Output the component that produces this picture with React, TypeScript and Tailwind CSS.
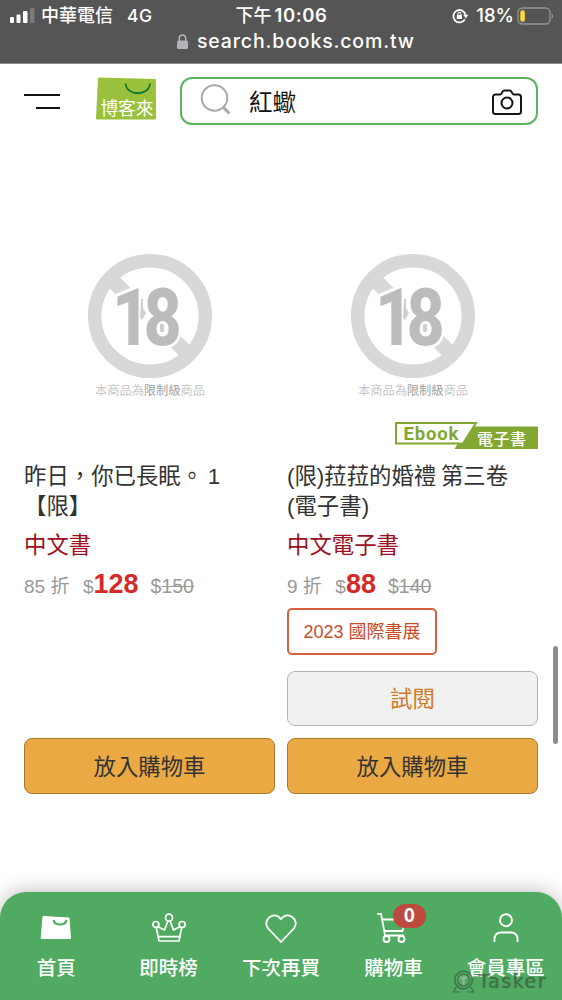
import type { ReactNode } from "react";

type Product = {
  title: string[];
  category: string;
  discount: string;
  price: string;
  listPrice: string;
  ebook?: boolean;
  tag?: string;
};

const products: Product[] = [
  {
    title: ["昨日，你已長眠。 1", "【限】"],
    category: "中文書",
    discount: "85 折",
    price: "128",
    listPrice: "150",
  },
  {
    title: ["(限)菈菈的婚禮 第三卷", "(電子書)"],
    category: "中文電子書",
    discount: "9 折",
    price: "88",
    listPrice: "140",
    ebook: true,
    tag: "2023 國際書展",
  },
];

const StatusBar = () => (
  <div className="h-16 shrink-0 border-b border-[#8a8a8a] bg-[#555555] font-['Inter','Noto_Sans_CJK_TC',sans-serif] text-white">
    <div className="grid h-[31px] grid-cols-[1fr_auto_1fr] items-center pl-[9px] pr-[8px] text-[17px] font-medium leading-[31px]">
      <div className="flex items-center">
        <svg width="26" height="16" viewBox="0 0 26 16" fill="#fff">
          <rect x="1" y="9" width="4" height="6" rx="1" />
          <rect x="7.5" y="6.5" width="4" height="8.5" rx="1" />
          <rect x="14" y="3" width="4.5" height="12" rx="1" />
          <rect x="21" y="0" width="4.5" height="15" rx="1" fill="#7b7b7b" />
        </svg>
        <span className="ml-[6px] text-[18px]">中華電信</span>
        <span className="ml-[14px] text-[17.5px] tracking-[0.5px]">4G</span>
      </div>
      <div className="text-[18.5px] font-semibold">
        <span className="text-[18px] font-medium">下午</span>
        <span className="ml-[3px] tracking-[0.6px]">10:06</span>
      </div>
      <div className="flex items-center justify-end">
        <svg width="17" height="16" viewBox="0 0 17 16" fill="none" stroke="#fff" strokeWidth="1.8">
          <path d="M12.9 11.4A6.2 6.2 0 1 1 13.6 6.8" />
          <path d="M11.2 6.8h5.2l-2.6 3.6z" fill="#fff" stroke="none" />
          <rect x="4.8" y="7" width="5.2" height="4" rx="0.6" fill="#fff" stroke="none" />
          <path d="M5.9 7.3V6a1.5 1.5 0 0 1 3 0v1.3" strokeWidth="1.1" />
        </svg>
        <span className="ml-[7px] text-[18.5px]">18%</span>
        <svg className="ml-[3px]" width="37" height="18" viewBox="0 0 37 18" fill="none">
          <rect x="1" y="1" width="32" height="16" rx="4.5" stroke="#929292" strokeWidth="1.4" />
          <rect x="3.3" y="3.2" width="4.6" height="11.6" rx="2" fill="#fbd53b" />
          <path d="M34.6 6.4c2 .8 2 4.4 0 5.2z" fill="#929292" />
        </svg>
      </div>
    </div>
    <div className="flex h-5 items-center pl-[177px] text-[19.5px] font-medium leading-5 tracking-[0.85px]">
      <svg width="11" height="15" viewBox="0 0 11 15">
        <rect y="6.5" width="11" height="8.5" rx="1.5" fill="#b2b2b7" />
        <path d="M2.3 7V4.3a3.2 3.2 0 0 1 6.4 0V7" fill="none" stroke="#b2b2b7" strokeWidth="1.5" />
      </svg>
      <span className="ml-[9px]">search.books.com.tw</span>
    </div>
  </div>
);

const Header = () => (
  <header className="flex h-[72px] shrink-0 items-center px-6 pt-[2px]">
    <div className="mt-px flex w-9 flex-col items-end gap-[11.5px]">
      <span className="h-[2px] w-9 bg-[#111]" />
      <span className="h-[2px] w-6 bg-[#111]" />
    </div>
    <svg className="-mt-1 ml-9" width="60" height="44" viewBox="0 0 60 44">
      <path d="M3 .5 59 2a1 1 0 0 1 .9 1L60 41.500a1 1 0 0 1-1 1H1a1 1 0 0 1-1-1L2 1.500a1 1 0 0 1 1-1z" fill="#99c13c" />
      <path d="M29.500 6.500c1 13 23.500 13 24.500 0" fill="none" stroke="#117a35" strokeWidth="1.8" />
      <text x="4.500" y="37.500" fontSize="17.8" fill="#fff" fontFamily="Noto Sans CJK TC" textLength="53">
        博客來
      </text>
    </svg>
    <div className="ml-6 flex h-12 flex-1 items-center rounded-[12px] border-2 border-[#58b45f] pl-[18px] pr-[14px]">
      <svg className="-mt-[3px]" width="32" height="32" viewBox="0 0 32 32" fill="none" stroke="#a9a9a9">
        <circle cx="14.500" cy="14" r="12.8" strokeWidth="2" />
        <path d="m23 23 6.500 6.500" strokeWidth="3" />
      </svg>
      <span className="ml-[17px] mt-[3px] text-[23.5px] leading-8 text-[#111]">紅蠍</span>
      <svg className="ml-auto mt-[2px]" width="30" height="26" viewBox="0 0 30 26" fill="none" stroke="#151515" strokeWidth="2" strokeLinejoin="round">
        <path d="M3.500 5.500h5c1.500 0 1.500-4 3.500-4h6c2 0 2 4 3.500 4h5A2.500 2.500 0 0 1 29 8v14.500a2.500 2.500 0 0 1-2.500 2.500h-23A2.500 2.500 0 0 1 1 22.500V8a2.500 2.500 0 0 1 2.500-2.500z" />
        <circle cx="15" cy="14" r="5.500" />
      </svg>
    </div>
  </header>
);

const RestrictedImage = () => (
  <svg className="block" width="126" height="150" viewBox="0 0 126 150">
    <circle cx="63" cy="63" r="55.3" fill="none" stroke="#d8d8d8" strokeWidth="13.5" />
    <path d="m19 21 20 20M104 104 88 88" stroke="#d8d8d8" strokeWidth="15" />
    <text
      transform="translate(25 91.5) scale(.84 1)"
      fill="#bcbcbc"
      stroke="#fff"
      strokeWidth="6"
      strokeLinejoin="round"
      paintOrder="stroke"
      fontFamily="Roboto, sans-serif"
      fontWeight="800"
      fontSize="79"
      letterSpacing="-8"
    >
      18
    </text>
    <path d="M54 46h2v9l3 5-4 7-2-2z" fill="#d0d0d0" />
    <rect x="73" y="71" width="4" height="8" rx="1" fill="#cfcfcf" />
    <text x="8" y="142" fontSize="12.3" fill="#c9c9c9" fontFamily="Noto Sans CJK TC" textLength="110">
      本商品為<tspan fill="#a2a2a2">限制級</tspan>商品
    </text>
  </svg>
);

const EbookLabel = () => (
  <svg className="block" width="144" height="28" viewBox="0 0 144 28">
    <path d="M60.500 27 74 4.500h70V27z" fill="#82a833" />
    <path d="M2 1H82L69 21.500H2z" fill="#fff" stroke="#82a833" strokeWidth="2" />
    <text x="9.500" y="18" fontSize="18.5" fontWeight="700" fill="#82a833" fontFamily="Roboto" textLength="55">
      Ebook
    </text>
    <text x="83" y="22.500" fontSize="16" fontWeight="500" fill="#fff" fontFamily="Noto Sans CJK TC" textLength="49">
      電子書
    </text>
  </svg>
);

const ProductCard = ({ product }: { product: Product }) => (
  <article className="flex h-[658px] w-[251px] flex-col">
    <div className="flex h-[286px] justify-center pt-[117px]">
      <RestrictedImage />
    </div>
    <div className="flex h-10 justify-end">{product.ebook && <EbookLabel />}</div>
    <h3 className="text-[22.4px] leading-[30px] text-[#333] [word-spacing:-1.5px]">
      {product.title.map((line) => (
        <span key={line} className="block whitespace-pre">
          {line}
        </span>
      ))}
    </h3>
    <p className="mt-[9px] text-[22.4px] leading-[30px] text-[#9d1022]">{product.category}</p>
    <p className="mt-[7px] flex h-8 items-baseline text-[19px] leading-8 text-[#999]">
      <span>{product.discount}</span>
      <span className="ml-[13.5px]">$</span>
      <strong className="text-[27px] font-bold text-[#d52a26]">{product.price}</strong>
      <span className="ml-3 text-[19.5px]">$</span>
      <span className="text-[19.5px] line-through">{product.listPrice}</span>
    </p>
    {product.tag && (
      <span className="mt-[8px] flex h-[47px] w-[150px] items-center justify-center rounded-[5px] border-2 border-[#d6603f] pt-[2px] text-[18px] text-[#cb4a27]">
        {product.tag}
      </span>
    )}
    <div className="mt-auto flex flex-col gap-3">
      {product.tag && (
        <button className="h-[55px] rounded-lg border border-[#b4b4b4] bg-[#f1f1f1] pt-[3px] text-[22.4px] text-[#d07a28]">試閱</button>
      )}
      <button className="h-14 rounded-lg border border-[#a8792b] bg-[#eba944] pt-[3px] text-[22.4px] text-[#333]">放入購物車</button>
    </div>
  </article>
);

const NavItem = ({ label, children }: { label: string; children: ReactNode }) => (
  <div className="flex flex-1 flex-col items-center pt-[20px]">
    <div className="relative h-8">{children}</div>
    <span className="mt-[9px] whitespace-nowrap text-[19.5px] font-medium leading-[30px]">{label}</span>
  </div>
);

const BottomNav = () => (
  <nav className="relative mt-auto flex h-[108px] shrink-0 rounded-t-[26px] bg-[#51aa61] text-white shadow-[0_-2px_20px_rgba(0,0,0,0.24)]">
    <NavItem label="首頁">
      <svg width="32" height="32" viewBox="0 0 32 32">
        <path d="M3 4.500 29 6 30.500 26.500H1.200z" fill="#fff" stroke="#fff" strokeLinejoin="round" />
        <path d="M13.500 8c1 6 12 6 13 0" fill="none" stroke="#51aa61" strokeWidth="2" />
      </svg>
    </NavItem>
    <NavItem label="即時榜">
      <svg width="34" height="32" viewBox="0 0 34 32" fill="none" stroke="#fff" strokeWidth="1.7" strokeLinejoin="round">
        <path d="M4.300 15.700 7 29h20l2.700-13.300M5.900 14.700 12.500 18l3.300-8.700M18.200 9.300l3.300 8.700 6.600-3.300M6 24.700h22" />
        <circle cx="17" cy="5.700" r="3.500" />
        <circle cx="3.900" cy="12.500" r="3" />
        <circle cx="30.100" cy="12.500" r="3" />
      </svg>
    </NavItem>
    <NavItem label="下次再買">
      <svg width="32" height="32" viewBox="0 0 32 32" fill="none" stroke="#fff" strokeWidth="1.8" strokeLinejoin="round">
        <path d="M16 30 3.200 16.500C-3.500 8.500 9-2.500 16 7.200 23-2.500 35.500 8.500 28.800 16.500z" />
      </svg>
    </NavItem>
    <NavItem label="購物車">
      <svg className="-ml-[3px]" width="32" height="32" viewBox="0 0 32 32" fill="none" stroke="#fff" strokeWidth="1.8">
        <path d="M1 1.800h4L9.200 24M6.500 7.500h23l-3 11.500H8.200M9 23.500h19" />
        <circle cx="10.500" cy="27" r="3" fill="#51aa61" />
        <circle cx="25.500" cy="27" r="3" fill="#51aa61" />
      </svg>
      <span className="absolute -top-2 left-[14px] flex h-6 w-[33px] items-center justify-center rounded-full bg-[#bd4a3f] pb-[4px] font-['Noto_Sans_CJK_TC',sans-serif] text-[19px] font-bold leading-6">
        0
      </span>
    </NavItem>
    <NavItem label="會員專區">
      <svg width="28" height="32" viewBox="0 0 28 32" fill="none" stroke="#fff" strokeWidth="1.9">
        <circle cx="14" cy="8.200" r="6" />
        <path d="M2.500 30v-3.500a6 6 0 0 1 6-6h11a6 6 0 0 1 6 6V30" />
      </svg>
    </NavItem>
    <div className="absolute bottom-[7px] right-[15px] flex items-center gap-[4px] opacity-60">
      <svg width="21" height="24" viewBox="0 0 21 24" fill="none" stroke="#374b3c">
        <circle cx="10.500" cy="11" r="8.800" strokeWidth="1.5" />
        <circle cx="10.500" cy="11" r="6" strokeWidth="1.2" />
        <path d="M7 8.500h7M10.500 8.500v7" stroke="#b9c6bb" strokeWidth="2.2" />
        <path d="m3 18-2.500 5h6M18 18l2.500 5h-6" strokeWidth="1.2" />
      </svg>
      <span className="font-['DejaVu_Sans',sans-serif] text-[19px] leading-6 tracking-[1.5px] text-[#374b3c] [text-shadow:0_0_1px_#374b3c]">Tasker</span>
    </div>
  </nav>
);

const App = () => {
  return (
    <div className="relative flex h-[1000px] w-[562px] flex-col overflow-hidden bg-white font-['Liberation_Sans','Noto_Sans_CJK_TC',sans-serif]">
      <StatusBar />
      <Header />
      <main className="flex gap-3 px-6">
        {products.map((product) => (
          <ProductCard key={product.price} product={product} />
        ))}
      </main>
      <BottomNav />
      <div className="absolute right-[4px] top-[646px] h-[98px] w-[5px] rounded-full bg-[#8d8d8d]" />
    </div>
  );
};

export default App;
